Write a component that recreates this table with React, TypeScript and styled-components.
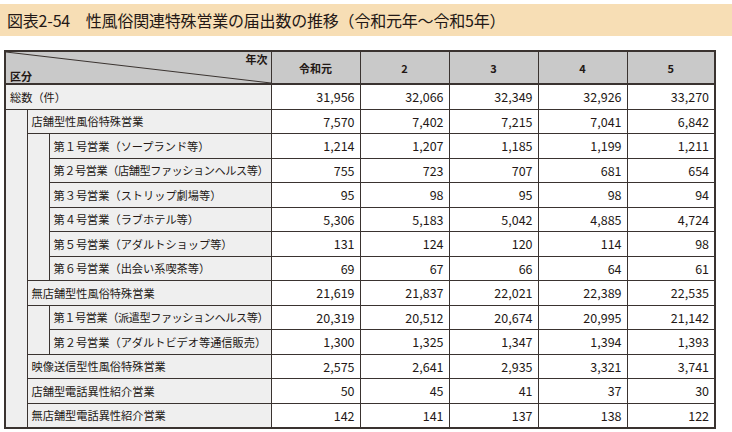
import styled, { createGlobalStyle } from 'styled-components';

const GlobalStyle = createGlobalStyle`
  html, body {
    margin: 0;
    padding: 0;
    background: #ffffff;
  }
  body {
    font-family: "Noto Sans CJK JP", "Noto Sans", sans-serif;
    color: #231815;
  }
`;

const Page = styled.div`
  width: 732px;
  height: 432px;
  padding-top: 4px;
  box-sizing: border-box;
  overflow: hidden;
`;

const TitleBar = styled.div`
  height: 32px;
  background: #f7deb5;
  display: flex;
  align-items: center;
  padding-left: 7px;
  font-size: 16px;
  letter-spacing: -0.2px;
  color: #231815;
`;

const TableWrap = styled.div`
  padding: 14px 0 0 4px;
`;

const Table = styled.table`
  border-collapse: collapse;
  table-layout: fixed;
  width: 710px;
  border: 2px solid #3a3330;
  font-size: 11px;
`;

const Col = styled.col<{ $w: number }>`
  width: ${(p) => p.$w}px;
`;

const HeadCell = styled.th`
  height: 31px;
  padding: 0;
  background: #c9c9c9;
  border: 1px solid #3a3330;
  border-bottom: 2px solid #3a3330;
  font-weight: 700;
  font-size: 11px;
  text-align: center;
  vertical-align: middle;
`;

const CornerCell = styled(HeadCell)`
  padding: 0 3px 0 4px;
  background: linear-gradient(
    to top right,
    #c9c9c9 calc(50% - 1px),
    #3a3330 50%,
    #c9c9c9 calc(50% + 1px)
  );
`;

const CornerInner = styled.div`
  display: flex;
  flex-direction: column;
  height: 31px;
  justify-content: space-between;
`;

const CornerTop = styled.span`
  align-self: flex-end;
  line-height: 14px;
`;

const CornerBottom = styled.span`
  align-self: flex-start;
  line-height: 14px;
`;

const LabelCell = styled.td<{ $tight?: boolean }>`
  height: 23.5px;
  padding: 0 0 0 4px;
  background: #efefef;
  border: 1px solid #3a3330;
  white-space: nowrap;
  overflow: hidden;
  font-size: 11.2px;
  letter-spacing: ${(p) => (p.$tight ? '-0.45px' : '0')};
  vertical-align: middle;
`;

const IndentCell = styled.td`
  padding: 0;
  background: #efefef;
  border: 1px solid #3a3330;
`;

const NumCell = styled.td`
  padding: 0 5px 0 0;
  background: #ffffff;
  border: 1px solid #3a3330;
  text-align: right;
  font-size: 12.5px;
  vertical-align: middle;
`;

type Row = { level: 0 | 1 | 2; label: string; values: string[]; tight?: boolean };

const rows: Row[] = [
  { level: 0, label: '総数（件）', values: ['31,956', '32,066', '32,349', '32,926', '33,270'] },
  { level: 1, label: '店舗型性風俗特殊営業', values: ['7,570', '7,402', '7,215', '7,041', '6,842'] },
  { level: 2, label: '第１号営業（ソープランド等）', values: ['1,214', '1,207', '1,185', '1,199', '1,211'] },
  { level: 2, label: '第２号営業（店舗型ファッションヘルス等）', values: ['755', '723', '707', '681', '654'], tight: true },
  { level: 2, label: '第３号営業（ストリップ劇場等）', values: ['95', '98', '95', '98', '94'] },
  { level: 2, label: '第４号営業（ラブホテル等）', values: ['5,306', '5,183', '5,042', '4,885', '4,724'] },
  { level: 2, label: '第５号営業（アダルトショップ等）', values: ['131', '124', '120', '114', '98'] },
  { level: 2, label: '第６号営業（出会い系喫茶等）', values: ['69', '67', '66', '64', '61'] },
  { level: 1, label: '無店舗型性風俗特殊営業', values: ['21,619', '21,837', '22,021', '22,389', '22,535'] },
  { level: 2, label: '第１号営業（派遣型ファッションヘルス等）', values: ['20,319', '20,512', '20,674', '20,995', '21,142'], tight: true },
  { level: 2, label: '第２号営業（アダルトビデオ等通信販売）', values: ['1,300', '1,325', '1,347', '1,394', '1,393'] },
  { level: 1, label: '映像送信型性風俗特殊営業', values: ['2,575', '2,641', '2,935', '3,321', '3,741'] },
  { level: 1, label: '店舗型電話異性紹介営業', values: ['50', '45', '41', '37', '30'] },
  { level: 1, label: '無店舗型電話異性紹介営業', values: ['142', '141', '137', '138', '122'] },
];

const years = ['令和元', '2', '3', '4', '5'];
const colWidths = [22, 22, 222, 89, 89, 89, 89, 88];

const renderRows = () =>
  rows.map((row, i) => {
    const cells = [];
    const prev = rows[i - 1];
    // gray gutter cells that show the nesting of sub-categories
    if (row.level >= 1 && prev && prev.level === 0) {
      cells.push(<IndentCell key="i0" rowSpan={rows.length - i} />);
    }
    if (row.level === 2 && prev && prev.level !== 2) {
      let n = 0;
      while (rows[i + n] && rows[i + n].level === 2) n++;
      cells.push(<IndentCell key="i1" rowSpan={n} />);
    }
    cells.push(
      <LabelCell key="l" colSpan={3 - row.level} $tight={row.tight}>
        {row.label}
      </LabelCell>
    );
    row.values.forEach((v, j) => cells.push(<NumCell key={j}>{v}</NumCell>));
    return <tr key={i}>{cells}</tr>;
  });

const App = () => {
  return (
    <Page>
      <GlobalStyle />
      <TitleBar>図表2-54　性風俗関連特殊営業の届出数の推移（令和元年～令和5年）</TitleBar>
      <TableWrap>
        <Table>
          <colgroup>
            {colWidths.map((w, i) => (
              <Col key={i} $w={w} />
            ))}
          </colgroup>
          <thead>
            <tr>
              <CornerCell colSpan={3}>
                <CornerInner>
                  <CornerTop>年次</CornerTop>
                  <CornerBottom>区分</CornerBottom>
                </CornerInner>
              </CornerCell>
              {years.map((y) => (
                <HeadCell key={y}>{y}</HeadCell>
              ))}
            </tr>
          </thead>
          <tbody>{renderRows()}</tbody>
        </Table>
      </TableWrap>
    </Page>
  );
};

export default App;
